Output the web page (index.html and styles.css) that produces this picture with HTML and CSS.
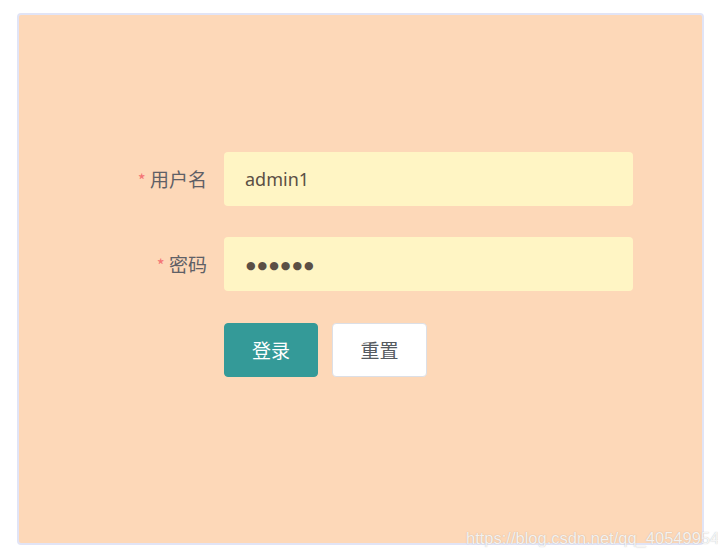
FILE: index.html
```html
<!DOCTYPE html>
<html lang="zh-CN">
<head>
<meta charset="utf-8">
<title>登录</title>
<link rel="stylesheet" href="styles.css">
</head>
<body>
<div class="card">
  <form class="form">
    <div class="row">
      <label class="label"><span class="star">*</span> 用户名</label>
      <div class="field">admin1</div>
    </div>
    <div class="row">
      <label class="label"><span class="star">*</span> 密码</label>
      <div class="field dots">●●●●●●</div>
    </div>
    <div class="actions">
      <button type="button" class="btn primary">登录</button>
      <button type="button" class="btn plain">重置</button>
    </div>
  </form>
</div>
<div class="watermark">https://blog.csdn.net/qq_40549954</div>
</body>
</html>
```
FILE: styles.css
```css
html, body {
  margin: 0;
  padding: 0;
  background: #ffffff;
}
body {
  width: 718px;
  height: 560px;
  position: relative;
  font-family: "Noto Sans", "Noto Sans CJK SC", sans-serif;
}
.card {
  box-sizing: border-box;
  margin: 13px 0 0 17px;
  width: 687px;
  height: 532px;
  border: 2px solid #e1e4f6;
  border-radius: 4px;
  background: #fdd8b8;
  padding-top: 137px;
}
.form {
  margin: 0;
}
.row {
  display: flex;
  align-items: center;
  height: 54px;
  margin-bottom: 31px;
}
.label {
  box-sizing: border-box;
  width: 205px;
  padding-right: 17px;
  text-align: right;
  font-size: 19px;
  color: #5f6066;
  font-family: "Noto Sans CJK SC", sans-serif;
  line-height: 24px;
}
.star {
  color: #f47474;
  font-size: 17px;
}
.field {
  box-sizing: border-box;
  width: 409px;
  height: 54px;
  border-radius: 4px;
  background: #fff5c4;
  padding-left: 21px;
  font-size: 18px;
  line-height: 54px;
  color: #5b4f45;
}
.dots {
  font-family: "DejaVu Sans", sans-serif;
  font-size: 11px;
  letter-spacing: 2px;
  padding-left: 22px;
  line-height: 58px;
}
.actions {
  display: flex;
  gap: 14px;
  margin-left: 205px;
  margin-top: 32px;
}
.btn {
  box-sizing: border-box;
  height: 54px;
  border-radius: 4px;
  font-family: "Noto Sans CJK SC", sans-serif;
  font-size: 19px;
  line-height: 24px;
  padding: 0;
  cursor: pointer;
}
.primary {
  width: 94px;
  background: #349a98;
  border: 1px solid #349a98;
  color: #ffffff;
}
.plain {
  width: 95px;
  background: #ffffff;
  border: 1px solid #dcdfe6;
  color: #555a60;
}
.watermark {
  position: absolute;
  left: 466px;
  top: 529px;
  font-family: "Liberation Sans", sans-serif;
  font-size: 16.5px;
  color: rgba(255, 255, 255, 0.85);
  text-shadow: 0 0 1px rgba(120, 120, 120, 0.5);
  white-space: nowrap;
}
```
